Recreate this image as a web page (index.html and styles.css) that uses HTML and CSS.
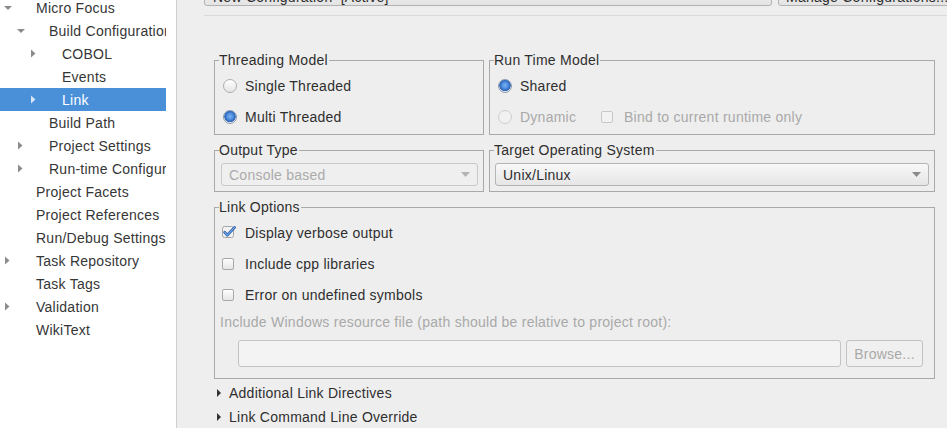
FILE: index.html
```html
<!DOCTYPE html>
<html>
<head>
<meta charset="utf-8">
<link rel="stylesheet" href="styles.css">
</head>
<body>
<div class="side">
  <div class="tree">
    <div class="row"><span class="tw"><svg width="18" height="23"><polygon class="ar" points="4,10 12,10 8,14"/></svg></span>Micro Focus</div>
    <div class="row l1"><span class="tw"><svg width="18" height="23"><polygon class="ar" points="4,10 12,10 8,14"/></svg></span>Build Configurations</div>
    <div class="row l2"><span class="tw"><svg width="18" height="23"><polygon class="ar" points="5,7.5 9.5,11.5 5,15.5"/></svg></span>COBOL</div>
    <div class="row l2"><span class="tw"></span>Events</div>
    <div class="row l2 sel"><span class="tw"><svg width="18" height="23"><polygon class="ar" points="5,7.5 9.5,11.5 5,15.5"/></svg></span>Link</div>
    <div class="row l1"><span class="tw"></span>Build Path</div>
    <div class="row l1"><span class="tw"><svg width="18" height="23"><polygon class="ar" points="5,7.5 9.5,11.5 5,15.5"/></svg></span>Project Settings</div>
    <div class="row l1"><span class="tw"><svg width="18" height="23"><polygon class="ar" points="5,7.5 9.5,11.5 5,15.5"/></svg></span>Run-time Configuration</div>
    <div class="row"><span class="tw"></span>Project Facets</div>
    <div class="row"><span class="tw"></span>Project References</div>
    <div class="row"><span class="tw"></span>Run/Debug Settings</div>
    <div class="row"><span class="tw"><svg width="18" height="23"><polygon class="ar" points="5,7.5 9.5,11.5 5,15.5"/></svg></span>Task Repository</div>
    <div class="row"><span class="tw"></span>Task Tags</div>
    <div class="row"><span class="tw"><svg width="18" height="23"><polygon class="ar" points="5,7.5 9.5,11.5 5,15.5"/></svg></span>Validation</div>
    <div class="row"><span class="tw"></span>WikiText</div>
  </div>
</div>
<div class="main">
  <div class="top">
    <div class="combo-top">New Configuration&nbsp;&nbsp;[Active]</div>
    <div class="btn-top">Manage Configurations...</div>
  </div>
  <div class="sep"></div>
  <div class="groups">
    <fieldset class="g-thread">
      <legend>Threading Model</legend>
      <div class="opt"><span class="radio"></span><span>Single Threaded</span></div>
      <div class="opt"><span class="radio on"></span><span>Multi Threaded</span></div>
    </fieldset>
    <fieldset class="g-run">
      <legend>Run Time Model</legend>
      <div class="opt"><span class="radio on"></span><span>Shared</span></div>
      <div class="opt dis">
        <span class="dyn"><span class="radio off"></span><span>Dynamic</span></span>
        <span class="cb off"></span><span class="cbtext">Bind to current runtime only</span>
      </div>
    </fieldset>
    <fieldset class="g-out">
      <legend>Output Type</legend>
      <div class="combo dis-combo"><span>Console based</span><svg width="9" height="5"><polygon points="0,0 9,0 4.5,5" fill="#b4b4b4"/></svg></div>
    </fieldset>
    <fieldset class="g-os">
      <legend>Target Operating System</legend>
      <div class="combo"><span>Unix/Linux</span><svg width="9" height="5"><polygon points="0,0 9,0 4.5,5" fill="#8a8a8a"/></svg></div>
    </fieldset>
    <fieldset class="g-link">
      <legend>Link Options</legend>
      <div class="opt"><svg class="cbsvg" width="15" height="14" viewBox="0 0 15 14"><rect x="0.5" y="1.5" width="11" height="11" rx="2" fill="#f2f2f2" stroke="#a4a4a4"/><path d="M2.6 7.2 L5.2 10.2 L12.6 2.4" fill="none" stroke="#2d5fa8" stroke-width="2.8" stroke-linecap="round" stroke-linejoin="round"/><path d="M2.6 7.2 L5.2 10.2 L12.6 2.4" fill="none" stroke="#74a8ea" stroke-width="1.2" stroke-linecap="round" stroke-linejoin="round"/></svg><span class="cbtext">Display verbose output</span></div>
      <div class="opt"><span class="cb"></span><span class="cbtext">Include cpp libraries</span></div>
      <div class="opt"><span class="cb"></span><span class="cbtext">Error on undefined symbols</span></div>
      <div class="lbl">Include Windows resource file (path should be relative to project root):</div>
      <div class="filerow">
        <div class="field"></div>
        <div class="browse">Browse...</div>
      </div>
    </fieldset>
  </div>
  <div class="exp">
    <div class="erow"><svg width="4" height="8"><polygon points="0,0 4,4 0,8" fill="#333"/></svg><span>Additional Link Directives</span></div>
    <div class="erow"><svg width="4" height="8"><polygon points="0,0 4,4 0,8" fill="#333"/></svg><span>Link Command Line Override</span></div>
  </div>
</div>
</body>
</html>
```
FILE: styles.css
```css
* { box-sizing: border-box; }
html, body { margin: 0; padding: 0; }
body {
  display: flex;
  width: 947px;
  height: 428px;
  overflow: hidden;
  background: #eeeeee;
  font-family: "Liberation Sans", Arial, sans-serif;
  font-size: 14px;
  letter-spacing: 0.25px;
  color: #2e2e2e;
}
.side {
  width: 177px;
  flex: none;
  background: #ffffff;
  border-right: 1px solid #cfcfcf;
  overflow: hidden;
}
.tree { width: 166px; margin-top: -4px; }
.row {
  height: 23px;
  display: flex;
  align-items: center;
  white-space: nowrap;
  overflow: hidden;
  color: #363636;
}
.row.l1 { padding-left: 13px; }
.row.l2 { padding-left: 26px; }
.row.sel { background: #4a90d9; color: #ffffff; }
.tw { width: 36px; height: 23px; flex: none; display: block; }
.tw svg { display: block; }
.ar { fill: #8c8c8c; }
.sel .ar { fill: #d6e4f6; }

.main {
  flex: 1;
  min-width: 0;
  padding-left: 27px;
  overflow: hidden;
}
.top {
  display: flex;
  gap: 6px;
  margin-top: -21px;
  width: max-content;
}
.combo-top {
  width: 568px;
  height: 27px;
  border: 1px solid #b2b2b2;
  border-radius: 3px;
  background: linear-gradient(#f6f6f6, #e4e4e4);
  padding: 9px 0 0 8px;
  line-height: 16px;
  color: #2e2e2e;
}
.btn-top {
  width: 200px;
  height: 27px;
  border: 1px solid #b2b2b2;
  border-radius: 3px;
  background: linear-gradient(#f6f6f6, #e4e4e4);
  padding: 9px 0 0 7px;
  line-height: 16px;
  color: #2e2e2e;
}
.sep {
  margin-top: 9px;
  margin-right: -30px;
  border-top: 1px solid #dadada;
}
.groups {
  margin: 36px 12px 0 10px;
  display: grid;
  grid-template-columns: 270px 1fr;
  column-gap: 5px;
  row-gap: 7px;
}
fieldset {
  margin: 0;
  min-width: 0;
  border: 1px solid #a9a9a9;
  padding: 2px 4px 2px 4px;
}
legend {
  padding: 0 1px 0 0;
  line-height: 16px;
  color: #2e2e2e;
}
.g-link { grid-column: 1 / 3; padding-bottom: 11px; }
.g-out, .g-os { padding-top: 5px; padding-bottom: 5px; }
.opt {
  height: 31px;
  display: flex;
  align-items: center;
  white-space: nowrap;
}
.radio {
  width: 14px;
  height: 14px;
  flex: none;
  margin: 0 8px 0 4px;
  border-radius: 50%;
  border: 1px solid #aeaeae;
  background: linear-gradient(#ffffff, #e4e4e4);
}
.radio.on {
  border-color: #8c9bb0;
  background: radial-gradient(circle at 50% 45%, #7fb2f0 0, #4f8fe0 3px, #2f6ac0 5px, #3a6fb8 5.5px, #e9e9e9 6px);
}
.radio.off {
  border-color: #cdcdcd;
  background: #f1f1f1;
}
.dis { color: #a9a9a9; }
.dyn { width: 107px; display: flex; align-items: center; flex: none; }
.cb {
  width: 12px;
  height: 12px;
  flex: none;
  margin: 0 0 0 3px;
  border-radius: 2px;
  border: 1px solid #a8a8a8;
  background: linear-gradient(#fdfdfd, #e6e6e6);
}
.cb.off {
  margin-left: 0;
  border-color: #c8c8c8;
  background: #f2f2f2;
}
.cbsvg { flex: none; margin: -2px -3px 0 3px; display: block; }
.cbtext { margin-left: 11px; }
.combo {
  height: 23px;
  margin: 0 1px 0 2px;
  border: 1px solid #b4b4b4;
  border-radius: 3px;
  background: linear-gradient(#f8f8f8, #e6e6e6);
  display: flex;
  align-items: center;
  justify-content: space-between;
  padding: 0 7px 0 7px;
  color: #2e2e2e;
}
.combo svg { display: block; }
.g-os .combo { margin: 0 1px 0 1px; }
.dis-combo {
  border-color: #c9c9c9;
  background: #efefef;
  color: #ababab;
}
.lbl {
  margin: 4px 0 0 1px;
  line-height: 16px;
  color: #a9a9a9;
  white-space: nowrap;
}
.filerow {
  margin: 10px 7px 0 19px;
  display: flex;
  gap: 5px;
  height: 27px;
}
.field {
  flex: 1;
  border: 1px solid #c3c3c3;
  border-radius: 3px;
  background: #f3f3f3;
}
.browse {
  width: 77px;
  flex: none;
  border: 1px solid #c3c3c3;
  border-radius: 3px;
  background: #f0f0f0;
  color: #a9a9a9;
  display: flex;
  align-items: center;
  justify-content: center;
}
.exp { margin: 2px 0 0 13px; }
.erow {
  height: 24px;
  display: flex;
  align-items: center;
  gap: 8px;
  white-space: nowrap;
}
.erow svg { display: block; flex: none; }
```
